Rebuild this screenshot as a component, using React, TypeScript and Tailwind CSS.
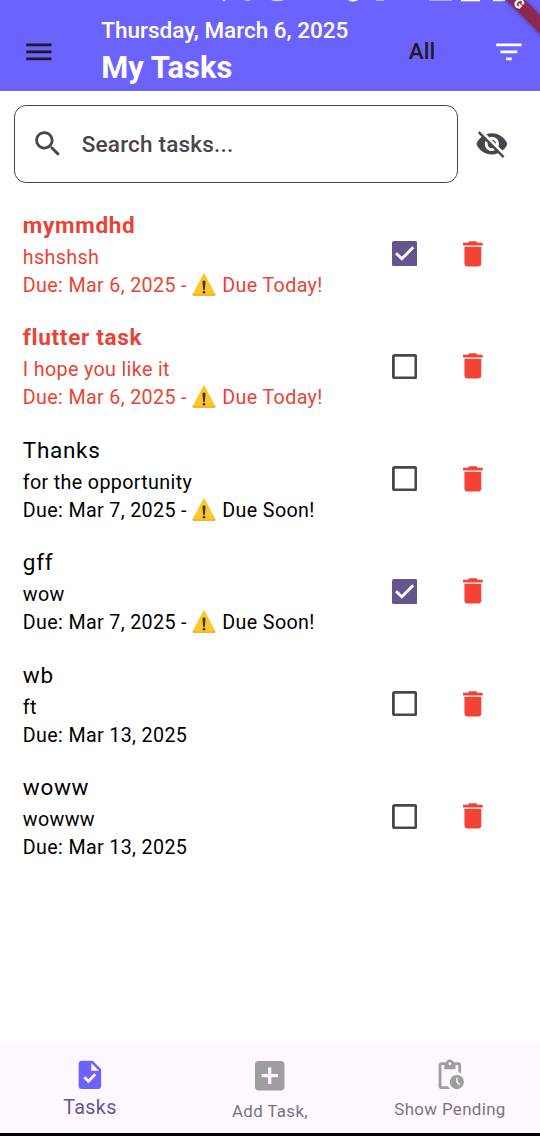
import React from 'react';

type Task = { title: string; note: string; due: string; alert?: string; done?: boolean; urgent?: boolean };

const tasks: Task[] = [
  { title: 'mymmdhd', note: 'hshshsh', due: 'Mar 6, 2025', alert: 'Due Today!', done: true, urgent: true },
  { title: 'flutter task', note: 'I hope you like it', due: 'Mar 6, 2025', alert: 'Due Today!', urgent: true },
  { title: 'Thanks', note: 'for the opportunity', due: 'Mar 7, 2025', alert: 'Due Soon!' },
  { title: 'gff', note: 'wow', due: 'Mar 7, 2025', alert: 'Due Soon!', done: true },
  { title: 'wb', note: 'ft', due: 'Mar 13, 2025' },
  { title: 'woww', note: 'wowww', due: 'Mar 13, 2025' },
];

const paths = {
  menu: 'M3 18h18v-2H3v2zm0-5h18v-2H3v2zm0-7v2h18V6H3z',
  filter: 'M10 18h4v-2h-4v2zM3 6v2h18V6H3zm3 7h12v-2H6v2z',
  search:
    'M15.5 14h-.79l-.28-.27C15.41 12.59 16 11.11 16 9.5 16 5.91 13.09 3 9.5 3S3 5.91 3 9.5 5.91 16 9.5 16c1.61 0 3.09-.59 4.23-1.57l.27.28v.79l5 4.99L20.49 19l-4.99-5zm-6 0C7.01 14 5 11.99 5 9.5S7.01 5 9.5 5 14 7.01 14 9.5 11.99 14 9.5 14z',
  hidden:
    'M12 7c2.76 0 5 2.24 5 5 0 .65-.13 1.26-.36 1.83l2.92 2.92c1.51-1.26 2.7-2.89 3.43-4.75-1.73-4.39-6-7.5-11-7.5-1.4 0-2.74.25-3.98.7l2.16 2.16C10.74 7.13 11.35 7 12 7zM2 4.27l2.28 2.28.46.46C3.08 8.3 1.78 10.02 1 12c1.73 4.39 6 7.5 11 7.5 1.55 0 3.03-.3 4.38-.84l.42.42L19.73 22 21 20.73 3.27 3 2 4.27zM7.53 9.8l1.55 1.55c-.05.21-.08.43-.08.65 0 1.66 1.34 3 3 3 .22 0 .44-.03.65-.08l1.55 1.55c-.67.33-1.41.53-2.2.53-2.76 0-5-2.24-5-5 0-.79.2-1.53.53-2.2zm4.31-.78l3.15 3.15.02-.16c0-1.66-1.34-3-3-3l-.17.01z',
  trash: 'M6 19c0 1.1.9 2 2 2h8c1.1 0 2-.9 2-2V7H6v12zM19 4h-3.5l-1-1h-5l-1 1H5v2h14V4z',
  task: 'M14 2H6c-1.1 0-1.99.9-1.99 2L4 20c0 1.1.89 2 1.99 2H18c1.1 0 2-.9 2-2V8l-6-6zm-3.06 16L7.4 14.46l1.41-1.41 2.12 2.12 4.24-4.24 1.41 1.41L10.94 18zM13 9V3.5L18.5 9H13z',
  add: 'M19 3H5c-1.11 0-2 .9-2 2v14c0 1.1.89 2 2 2h14c1.1 0 2-.9 2-2V5c0-1.1-.9-2-2-2zm-2 10h-4v4h-2v-4H7v-2h4V7h2v4h4v2z',
  pending:
    'M17 12c-2.76 0-5 2.24-5 5s2.24 5 5 5 5-2.24 5-5-2.24-5-5-5zm1.65 7.35L16.5 17.2V14h1v2.79l1.85 1.85-.7.71zM18 3h-3.18C14.4 1.84 13.3 1 12 1s-2.4.84-2.82 2H6c-1.1 0-2 .9-2 2v15c0 1.1.9 2 2 2h6.11c-.59-.57-1.07-1.25-1.42-2H6V5h2v3h8V5h2v5.08c.71.1 1.38.31 2 .6V5c0-1.1-.9-2-2-2zm-6 2c-.55 0-1-.45-1-1s.45-1 1-1 1 .45 1 1-.45 1-1 1z',
};

function Icon({ name, className = '' }: { name: keyof typeof paths; className?: string }) {
  return (
    <svg viewBox="0 0 24 24" fill="currentColor" className={`block shrink-0 ${className}`}>
      <path d={paths[name]} />
    </svg>
  );
}

function Warning() {
  return (
    <svg viewBox="0 0 24 24" className="mr-[6px] ml-[5.500px] inline-block h-[24px] w-[24px] align-[-5px]">
      <path d="M11 1.600q1-1.600 2 0L23.300 21q.7 1.700-1 1.700H1.700q-1.700 0-1-1.700z" fill="#fcc62d" />
      <path d="M.7 21q-.7 1.700 1 1.700h20.600q1.700 0 1-1.700l-.4-.8q.2 1.200-1 1.200H2.100q-1.200 0-1-1.200z" fill="#f2a52a" />
      <path d="M10.500 8.800q0-1.300 1.500-1.300t1.500 1.300l-.5 7.300q-.1 1-1 1t-1-1z" fill="#3c3a35" />
      <circle cx="12" cy="19.200" r="1.400" fill="#3c3a35" />
    </svg>
  );
}

function Checkbox({ checked }: { checked?: boolean }) {
  return (
    <svg viewBox="0 0 18 18" className="block h-[25.3px] w-[25.3px] shrink-0">
      {checked ? (
        <>
          <rect width="18" height="18" rx="1.5" fill="#65558f" />
          <path d="M2.900 8.700L7 12.700L15.100 4.500" fill="none" stroke="#fff" strokeWidth="2" />
        </>
      ) : (
        <rect x="1" y="1" width="16" height="16" rx="1" fill="none" stroke="#49454f" strokeWidth="2" />
      )}
    </svg>
  );
}

function TaskRow({ task }: { task: Task }) {
  return (
    <li className={`flex h-[112.5px] items-center pl-[22.800px] ${task.urgent ? 'text-[#ea4335]' : 'text-black'}`}>
      <div className="w-[369.300px] whitespace-nowrap text-[19.700px] leading-[28.1px] tracking-[0.35px]">
        <h2 className={`text-[22.500px] leading-[33.75px] tracking-[0.7px] ${task.urgent ? 'font-bold' : 'font-normal'}`}>
          {task.title}
        </h2>
        <p className="pt-px">{task.note}</p>
        <p className="h-[27.100px]">
          Due: {task.due}
          {task.alert && (
            <>
              {' -'}
              <Warning />
              {task.alert}
            </>
          )}
        </p>
      </div>
      <Checkbox checked={task.done} />
      <Icon name="trash" className="ml-[38.300px] h-[33.75px] w-[33.75px] text-[#f44336]" />
    </li>
  );
}

function StatusBar() {
  return (
    <svg viewBox="0 0 540 3" className="absolute top-0 left-0 h-[3px] w-[540px]" fill="#fff">
      <path d="M222 0h4l-2 1.800z" opacity=".7" />
      <path d="M244 0h7q-3.500 2-7 0z" opacity=".6" />
      <path d="M271 0h13q-2 1.300-6.500 1.300t-6.500-1.300z" opacity=".7" />
      <path d="M348 0h10q-5 3-10 0z" />
      <rect x="376" width="8" height="1" opacity=".5" />
      <rect x="429" width="23" height="1" opacity=".45" />
      <rect x="461" width="19" height="1.300" />
      <rect x="493" width="12" height="1.200" opacity=".9" />
    </svg>
  );
}

export default function App() {
  return (
    <div className="flex h-[1136px] w-[540px] flex-col overflow-hidden bg-white font-['Roboto',sans-serif]">
      <header className="relative flex h-[90.500px] shrink-0 overflow-hidden bg-[#6c63ff] text-white">
        <StatusBar />
        <Icon name="menu" className="mt-[34.500px] ml-[22px] h-[33.75px] w-[33.75px] text-[#1d1b20]" />
        <div className="mt-[13.500px] ml-[45.500px] w-[307.500px] whitespace-nowrap">
          <p className="text-[22.500px] leading-[32px] font-medium">Thursday, March 6, 2025</p>
          <h1 className="pt-[1.500px] text-[30.900px] leading-[42px] font-bold">My Tasks</h1>
        </div>
        <span className="mt-[35px] w-[83.500px] text-[22.500px] leading-[32px] font-medium text-[#1d1b20]">All</span>
        <Icon name="filter" className="mt-[34.500px] h-[33.75px] w-[33.75px]" />
        <div className="absolute top-[1.500px] left-[484px] flex h-[13px] w-[80px] rotate-45 items-center justify-center bg-[#8e2850] pr-[14px] text-[13.500px] leading-[13px] font-black shadow-[0_0_5px_rgba(0,0,0,0.4)]">
          G
        </div>
      </header>

      <section className="flex shrink-0 items-center pt-[14.500px] pl-[14px]">
        <div className="flex h-[78px] w-[444.400px] items-center rounded-[12px] border-[1.400px] border-[#49454f] pb-px pl-[16px] text-[#49454f]">
          <Icon name="search" className="h-[33.75px] w-[33.75px]" />
          <span className="ml-[17px] text-[22.500px] leading-[32px] font-medium tracking-[0.2px]">Search tasks...</span>
        </div>
        <Icon name="hidden" className="ml-[16.600px] h-[33.75px] w-[33.75px] text-[#49454f]" />
      </section>

      <ul className="mt-[14.500px] flex-1">
        {tasks.map((task) => (
          <TaskRow key={task.title} task={task} />
        ))}
      </ul>

      <nav className="grid h-[93px] shrink-0 grid-cols-3 border-b-[3px] border-black bg-[#fef7ff] text-center whitespace-nowrap text-[#79747e]">
        <div className="flex flex-col items-center pt-[15px] text-[19.700px] leading-[28px] tracking-[0.35px] text-[#65558f]">
          <Icon name="task" className="h-[33.75px] w-[33.75px] text-[#6c63ff]" />
          <span className="mt-[2px]">Tasks</span>
        </div>
        <div className="flex flex-col items-center pt-[12.500px] text-[16.900px] leading-[24px] tracking-[0.35px]">
          <Icon name="add" className="h-[39.400px] w-[39.400px] text-[#9e9e9e]" />
          <span className="mt-[4.500px]">Add Task,</span>
        </div>
        <div className="flex flex-col items-center pt-[15px] text-[16.900px] leading-[24px] tracking-[0.35px]">
          <Icon name="pending" className="h-[33.75px] w-[33.75px] text-[#9e9e9e]" />
          <span className="mt-[4.800px]">Show Pending</span>
        </div>
      </nav>
    </div>
  );
}
